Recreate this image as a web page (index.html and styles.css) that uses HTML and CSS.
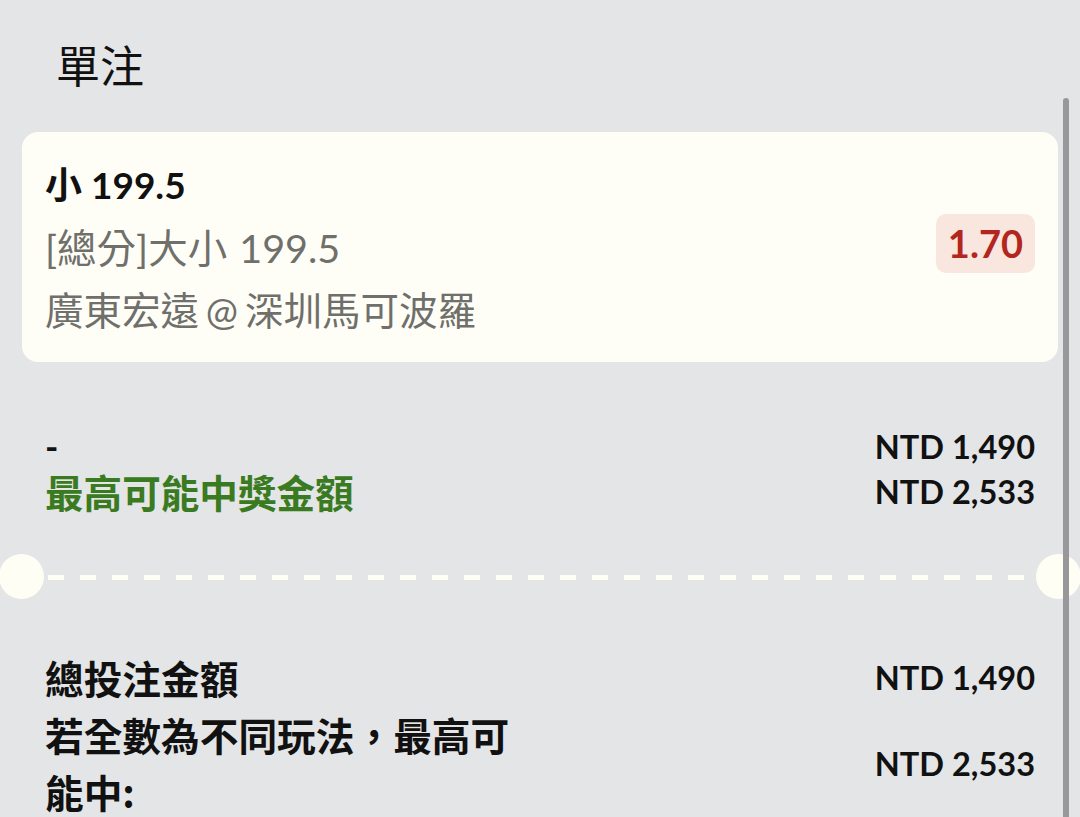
FILE: index.html
```html
<!DOCTYPE html>
<html lang="zh-Hant">
<head>
<meta charset="utf-8">
<title>單注</title>
<link rel="stylesheet" href="styles.css">
</head>
<body>
<div class="page">
  <header class="header">
    <h1 class="title">單注</h1>
  </header>

  <section class="card">
    <div class="card-info">
      <div class="pick">小 199.5</div>
      <div class="market">[總分]大小 199.5</div>
      <div class="match">廣東宏遠 @ 深圳馬可波羅</div>
    </div>
    <div class="odds">1.70</div>
  </section>

  <section class="summary">
    <div class="summary-left">
      <div class="dash-label">-</div>
      <div class="win-label">最高可能中獎金額</div>
    </div>
    <div class="summary-right">
      <div class="amount">NTD 1,490</div>
      <div class="amount">NTD 2,533</div>
    </div>
  </section>

  <div class="divider">
    <span class="notch notch-left"></span>
    <span class="dashes"></span>
    <span class="notch notch-right"></span>
  </div>

  <section class="totals">
    <div class="total-row">
      <div class="total-label">總投注金額</div>
      <div class="amount">NTD 1,490</div>
    </div>
    <div class="total-row">
      <div class="total-label">若全數為不同玩法，最高可能中:</div>
      <div class="amount">NTD 2,533</div>
    </div>
  </section>

  <div class="scrollbar"></div>
</div>
</body>
</html>
```

FILE: styles.css
```css
html, body {
  margin: 0;
  padding: 0;
}

body {
  background: #e4e5e7;
  font-family: "Lato", "Noto Sans CJK TC", sans-serif;
  color: #111;
  width: 1080px;
  height: 817px;
  overflow: hidden;
}

.page {
  position: relative;
  height: 817px;
  overflow: hidden;
}

.header {
  height: 132px;
  display: flex;
  align-items: center;
  padding: 0 0 5px 56px;
  box-sizing: border-box;
}

.title {
  margin: 0;
  font-family: "Noto Sans CJK TC", sans-serif;
  font-size: 44px;
  font-weight: 400;
  line-height: 1;
  color: #111;
}

.card {
  margin: 0 22px;
  height: 230px;
  box-sizing: border-box;
  padding: 20px 23px;
  background: #fffef6;
  border-radius: 16px;
  display: flex;
  align-items: center;
  justify-content: space-between;
}

.card-info {
  font-size: 38.5px;
  line-height: 63px;
}

.pick {
  font-size: 37px;
  font-weight: 700;
  color: #111;
}

.market,
.match {
  color: #6f6f6c;
}

.market {
  font-size: 39.5px;
  word-spacing: 2px;
}

.match {
  word-spacing: -3px;
}

.odds {
  margin-top: -8px;
  padding: 8px 12px;
  background: #f8e6df;
  border-radius: 10px;
  color: #b3261e;
  font-size: 38px;
  font-weight: 700;
  line-height: 43px;
}

.summary {
  display: flex;
  justify-content: space-between;
  padding: 62px 45px 63px 45px;
  line-height: 45px;
}

.dash-label {
  font-size: 36px;
  font-weight: 700;
  color: #111;
}

.win-label {
  font-family: "Noto Sans CJK TC", sans-serif;
  font-size: 38.6px;
  font-weight: 700;
  color: #3a7b22;
}

.summary-right {
  text-align: right;
}

.amount {
  font-size: 32.5px;
  font-weight: 700;
  color: #111;
  white-space: nowrap;
}

.divider {
  position: relative;
  height: 0;
  margin: 0;
}

.dashes {
  position: absolute;
  left: 48px;
  right: 46px;
  top: -2px;
  height: 5px;
  background: repeating-linear-gradient(90deg, #fffef5 0 16px, transparent 16px 32px);
}

.notch {
  position: absolute;
  top: -23px;
  width: 45px;
  height: 45px;
  border-radius: 50%;
  background: #fffef5;
}

.notch-left {
  left: -1px;
}

.notch-right {
  right: -1px;
}

.totals {
  padding: 72px 45px 0 45px;
}

.total-row {
  display: flex;
  justify-content: space-between;
  align-items: center;
}

.total-label {
  max-width: 480px;
  font-family: "Noto Sans CJK TC", sans-serif;
  font-size: 38.7px;
  font-weight: 700;
  line-height: 57px;
  color: #111;
}

.totals .amount {
  line-height: 57px;
}

.scrollbar {
  position: absolute;
  top: 98px;
  bottom: -10px;
  left: 1063px;
  width: 6px;
  border-radius: 3px;
  background: #98989b;
}
```
